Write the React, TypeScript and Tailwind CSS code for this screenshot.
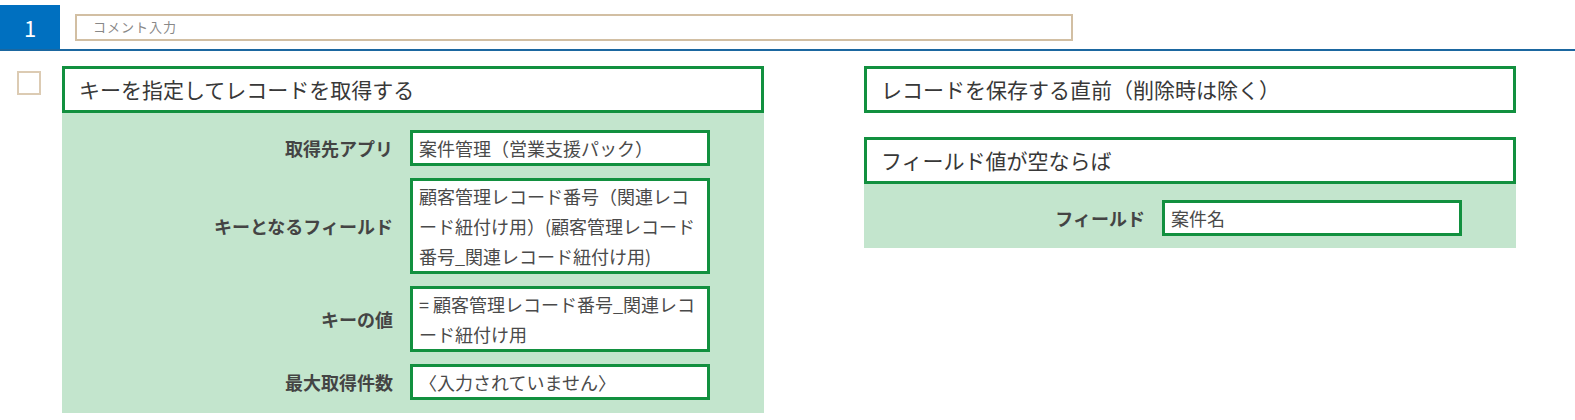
import React from 'react';

const font = { fontFamily: '"Noto Sans CJK JP", "Noto Sans", sans-serif' };

type Row = { label: string; value: string };

const leftRows: Row[] = [
  { label: '取得先アプリ', value: '案件管理（営業支援パック）' },
  {
    label: 'キーとなるフィールド',
    value: '顧客管理レコード番号（関連レコード紐付け用）(顧客管理レコード番号_関連レコード紐付け用)',
  },
  { label: 'キーの値', value: '= 顧客管理レコード番号_関連レコード紐付け用' },
  { label: '最大取得件数', value: '〈入力されていません〉' },
];

const Header: React.FC<{ title: string }> = ({ title }) => (
  <div className="h-[47px] flex items-center bg-white border-[3px] border-[#12903f] px-[14px] text-[21px] text-[#383838]">
    {title}
  </div>
);

const FieldRow: React.FC<Row> = ({ label, value }) => (
  <div className="flex items-center pr-[54px]">
    <div className="flex-1 text-right pr-[17px] text-[18px] font-bold text-[#444]">{label}</div>
    <div className="w-[300px] min-h-[35px] bg-white border-[3px] border-[#12903f] px-[6px] text-[18px] leading-[30px] text-[#4a4a4a]">
      {value}
    </div>
  </div>
);

const App: React.FC = () => {
  return (
    <div className="w-[1575px] h-[420px] bg-white" style={font}>
      {/* top bar */}
      <div className="flex items-center pt-[5px] border-b-2 border-[#1b67a0]">
        <div className="w-[60px] h-[44px] bg-[#0070c0] text-white text-[22px] flex items-center justify-center">
          1
        </div>
        <div className="ml-[15px] w-[998px] h-[27px] border-2 border-[#d2bfa3] flex items-center pl-[16px] text-[13px] tracking-[1px] text-[#888]">
          コメント入力
        </div>
      </div>

      <div className="flex items-start pt-[15px]">
        <div className="ml-[17px] mt-[5px] w-[24px] h-[24px] border-2 border-[#dccbb3]" />

        {/* left action */}
        <div className="ml-[21px] w-[702px]">
          <Header title="キーを指定してレコードを取得する" />
          <div className="bg-[#c3e5cd] pt-[17px] pb-[13px] flex flex-col gap-[12px]">
            {leftRows.map((r, i) => (
              <FieldRow key={i} label={r.label} value={r.value} />
            ))}
          </div>
        </div>

        {/* right condition */}
        <div className="ml-[100px] w-[652px] flex flex-col gap-[24px]">
          <Header title="レコードを保存する直前（削除時は除く）" />
          <div>
            <Header title="フィールド値が空ならば" />
            <div className="bg-[#c3e5cd] pt-[16px] pb-[12px]">
              <FieldRow label="フィールド" value="案件名" />
            </div>
          </div>
        </div>
      </div>
    </div>
  );
};

export default App;
